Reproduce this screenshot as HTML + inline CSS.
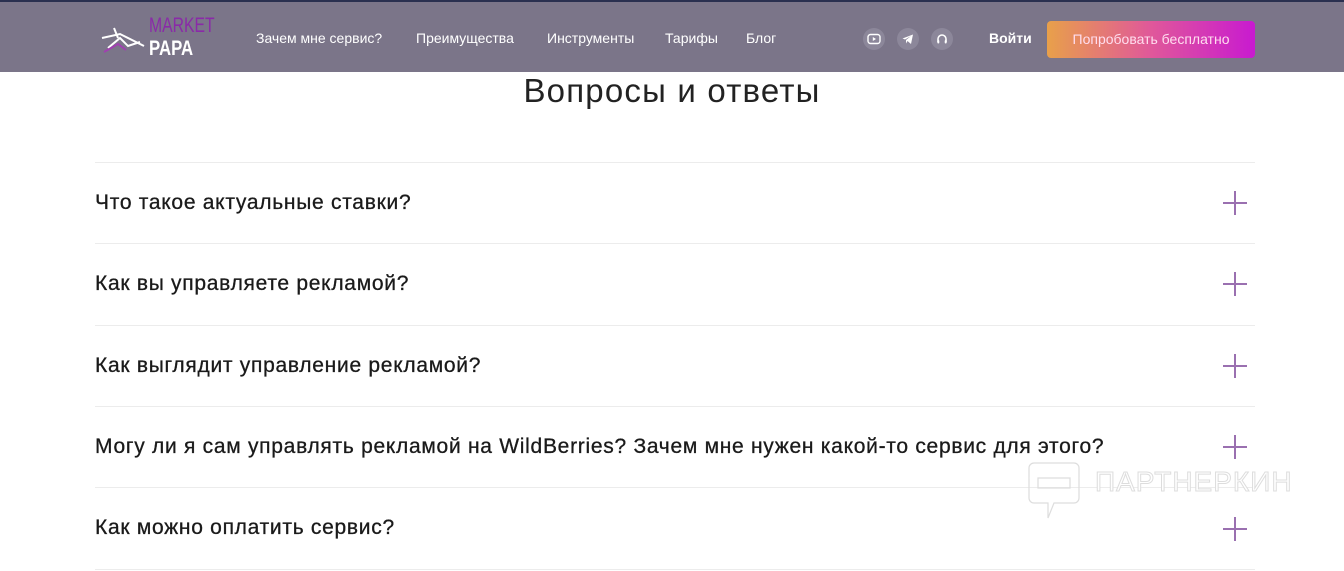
<!DOCTYPE html>
<html><head><meta charset="utf-8"><style>
body{margin:0;width:1344px;height:571px;overflow:hidden;background:#fff;font-family:"Liberation Sans",sans-serif;position:relative}
.hdr{position:absolute;top:0;left:0;width:1344px;height:72px;background:#7b7589;border-top:2px solid #2a3050;box-sizing:border-box}
.nav{position:absolute;top:28px;color:#fff;font-size:14px}
.ic{position:absolute;top:26px;width:22px;height:22px;border-radius:50%;background:#8c879a}
.ic svg{position:absolute;left:4px;top:4px}
.btn{position:absolute;left:1047px;top:19px;width:208px;height:37px;border-radius:4px;background:linear-gradient(90deg,#e8a04a,#e0589a 50%,#c81ad0);color:#fde;font-size:14px;text-align:center;line-height:37px}
h1{position:absolute;top:72px;left:0;width:1344px;margin:0;text-align:center;font-weight:normal;font-size:33px;color:#222;letter-spacing:1.2px}
.line{position:absolute;left:95px;width:1160px;height:1px;background:#ececec}
.q{position:absolute;left:95px;font-size:21px;letter-spacing:0.72px;color:#1a1a1a;-webkit-text-stroke:0.3px #1a1a1a}
.p{position:absolute;left:1223px;width:24px;height:24px}
.p:before{content:"";position:absolute;left:11px;top:0;width:2px;height:24px;background:#9a70b0}
.p:after{content:"";position:absolute;top:11px;left:0;height:2px;width:24px;background:#9a70b0}
</style></head><body>
<div class="hdr">
<svg style="position:absolute;left:100px;top:14px" width="48" height="40" viewBox="0 0 48 40"><path d="M2 22 L20 18 L44 30 M14 12 L18 22 M8 32 L20 22 L28 30 L40 26" stroke="#fff" stroke-width="2" fill="none"/><path d="M4 36 L18 28 L26 34" stroke="#a040b0" stroke-width="2" fill="none"/></svg>
<div style="position:absolute;left:149px;top:14px;color:#8a2aa8;font-size:21px;line-height:20px;transform:scaleX(.75);transform-origin:left">MARKET</div>
<div style="position:absolute;left:149px;top:36px;color:#fff;font-size:21px;font-weight:bold;line-height:22px;transform:scaleX(.8);transform-origin:left">PAPA</div>
<div class="nav" style="left:256px">Зачем мне сервис?</div>
<div class="nav" style="left:416px">Преимущества</div>
<div class="nav" style="left:547px">Инструменты</div>
<div class="nav" style="left:665px">Тарифы</div>
<div class="nav" style="left:746px">Блог</div>
<div class="ic" style="left:863px"><svg width="14" height="14" viewBox="0 0 14 14"><rect x="1" y="2.5" width="12" height="9" rx="2.5" stroke="#fff" stroke-width="1.4" fill="none"/><path d="M5.8 5 L9 7 L5.8 9Z" fill="#fff"/></svg></div>
<div class="ic" style="left:897px"><svg width="14" height="14" viewBox="0 0 14 14"><path d="M1.5 6.5 L12 2.5 L10 12 L6.5 9 L5 11.5 L5 8 L10 4 L4 7.5Z" fill="#fff"/></svg></div>
<div class="ic" style="left:931px"><svg width="14" height="14" viewBox="0 0 14 14"><path d="M3 10 V7 A4 4 0 0 1 11 7 V10" stroke="#fff" stroke-width="1.6" fill="none"/><rect x="2.3" y="8" width="2" height="3.5" rx="1" fill="#fff"/><rect x="9.7" y="8" width="2" height="3.5" rx="1" fill="#fff"/></svg></div>
<div class="nav" style="left:989px;font-weight:bold">Войти</div>
<div class="btn">Попробовать бесплатно</div>
</div>
<h1>Вопросы и ответы</h1>
<div class="line" style="top:162px"></div>
<div class="q" style="top:191px">Что такое актуальные ставки?</div><div class="p" style="top:191px"></div>
<div class="line" style="top:243px"></div>
<div class="q" style="top:272px">Как вы управляете рекламой?</div><div class="p" style="top:272px"></div>
<div class="line" style="top:325px"></div>
<div class="q" style="top:354px">Как выглядит управление рекламой?</div><div class="p" style="top:354px"></div>
<div class="line" style="top:406px"></div>
<div class="q" style="top:435px">Могу ли я сам управлять рекламой на WildBerries? Зачем мне нужен какой-то сервис для этого?</div><div class="p" style="top:435px"></div>
<div class="line" style="top:487px"></div>
<div class="q" style="top:516px">Как можно оплатить сервис?</div><div class="p" style="top:517px"></div>
<div class="line" style="top:569px"></div>
<svg style="position:absolute;left:1028px;top:462px" width="52" height="58" viewBox="0 0 52 58"><path d="M6 1 H46 A5 5 0 0 1 51 6 V36 A5 5 0 0 1 46 41 H26 L20 56 V41 H6 A5 5 0 0 1 1 36 V6 A5 5 0 0 1 6 1Z M10 16 H42 V26 H10Z" stroke="#ddd" stroke-width="1.2" fill="none"/></svg>
<div style="position:absolute;left:1095px;top:466px;font-size:28px;color:#fff;-webkit-text-stroke:1px #ddd;letter-spacing:1px">ПАРТНЕРКИН</div>
</body></html>
